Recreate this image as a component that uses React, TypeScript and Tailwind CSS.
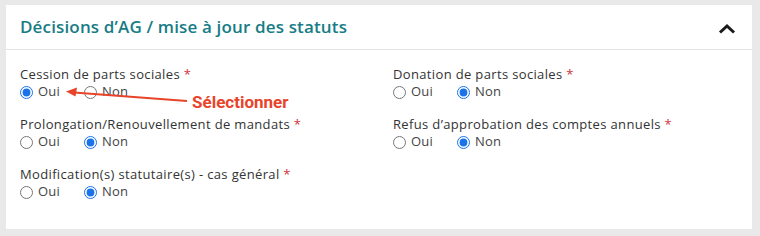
import type { ReactNode } from 'react';

type Field = { label: string; value: 'oui' | 'non' };

const rows: Field[][] = [
  [
    { label: 'Cession de parts sociales', value: 'oui' },
    { label: 'Donation de parts sociales', value: 'non' },
  ],
  [
    { label: 'Prolongation/Renouvellement de mandats', value: 'non' },
    { label: 'Refus d’approbation des comptes annuels', value: 'non' },
  ],
  [{ label: 'Modification(s) statutaire(s) - cas général', value: 'non' }],
];

function Radio({ checked, children }: { checked: boolean; children: ReactNode }) {
  return (
    <label className="flex items-center gap-[5px]">
      <input type="radio" checked={checked} readOnly className="m-0 h-[13px] w-[13px] accent-[#1a73e8]" />
      <span>{children}</span>
    </label>
  );
}

function RadioField({ field }: { field: Field }) {
  return (
    <div className="flex flex-col">
      <div className="h-[17px] font-medium leading-[17px] tracking-[0.35px] text-[#333]">
        {field.label} <span className="text-[#d0343a]">*</span>
      </div>
      <div className="flex h-[18px] items-center gap-[24px] tracking-[0.2px] text-[#444]">
        <Radio checked={field.value === 'oui'}>Oui</Radio>
        <Radio checked={field.value === 'non'}>Non</Radio>
      </div>
    </div>
  );
}

export default function App() {
  return (
    <div className="h-[236px] w-[760px] bg-[#e9e9e9] pl-[6px] pt-[5px] font-['Open_Sans',sans-serif]">
      <div className="relative h-[224px] w-[746px] bg-white">
        <div className="flex h-[45px] items-center justify-between border-b border-[#e4e4e4] pl-[14px] pr-[16px]">
          <h2 className="text-[17px] font-semibold tracking-[0.15px] text-[#177c86]">
            Décisions d’AG / mise à jour des statuts
          </h2>
          <svg width="18" height="12" viewBox="0 0 18 12" className="mt-[4px]">
            <path d="M2 9.5 L9 3 L16 9.5" fill="none" stroke="#1a1a1a" strokeWidth="3" />
          </svg>
        </div>

        <div className="flex flex-col gap-[15px] pl-[14px] pt-[16px] text-[13px]">
          {rows.map((row, i) => (
            <div key={i} className="grid grid-cols-[373px_1fr]">
              {row.map((field) => (
                <RadioField key={field.label} field={field} />
              ))}
            </div>
          ))}
        </div>

        <svg className="absolute left-[50px] top-[80px]" width="140" height="20" viewBox="0 0 140 20">
          <path d="M131 16 L18 7.5" stroke="#e8442a" strokeWidth="2" fill="none" />
          <path d="M10 6.5 L21 2.5 L19.5 11.5 Z" fill="#e8442a" />
        </svg>
        <span className="absolute left-[186px] top-[87px] font-['Roboto',sans-serif] text-[17px] font-bold leading-[20px] text-[#e8442a]">
          Sélectionner
        </span>
      </div>
    </div>
  );
}
